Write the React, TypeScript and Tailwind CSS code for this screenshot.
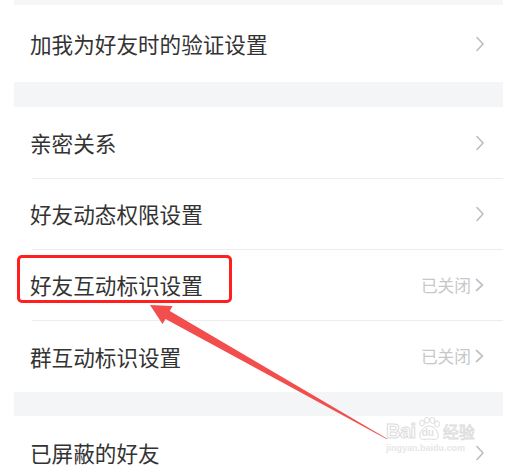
import React from "react";

const font = { fontFamily: '"Noto Sans CJK SC", "Noto Sans", sans-serif' };

function Chevron({ small }: { small?: boolean }) {
  return small ? (
    <svg width="11" height="14" viewBox="0 0 11 14" className="shrink-0">
      <path d="M2.5 1.5 L8.5 7 L2.5 12.5" fill="none" stroke="#c4c4c4" strokeWidth="1.8" strokeLinejoin="round" strokeLinecap="round" />
    </svg>
  ) : (
    <svg width="10" height="16" viewBox="0 0 10 16" className="shrink-0">
      <path d="M2 1.5 L8 8 L2 14.5" fill="none" stroke="#bdbdbd" strokeWidth="1.6" strokeLinejoin="round" strokeLinecap="round" />
    </svg>
  );
}

function Row({ label, value, sep, h = "h-[71px]" }: { label: string; value?: string; sep?: boolean; h?: string }) {
  return (
    <div className="flex flex-col shrink-0">
      <div className={`flex items-center ${h} pl-[16px] pr-[18px] bg-white`}>
        <span className="flex-1 text-[21.6px] leading-none text-[#333333]">{label}</span>
        {value ? (
          <div className="flex items-center gap-[3px]">
            <span className="text-[16.7px] leading-none text-[#c8c8c8]">{value}</span>
            <Chevron small />
          </div>
        ) : (
          <Chevron />
        )}
      </div>
      {sep && (
        <div className="flex bg-white">
          <div className="w-[18px]" />
          <div className="flex-1 h-px bg-[#ececec]" />
        </div>
      )}
    </div>
  );
}

export default function App() {
  return (
    <div className="relative w-[505px] h-[466px] overflow-hidden bg-white flex" style={font}>
      <div className="w-[14px] shrink-0 bg-white" />
      <div className="w-[489px] flex flex-col">
        <div className="h-[5px] shrink-0 bg-[#f5f6f8]" />
        <Row label="加我为好友时的验证设置" h="h-[77px]" />
        <div className="h-[25px] shrink-0 bg-[#f4f5f7]" />
        <Row label="亲密关系" sep />
        <Row label="好友动态权限设置" sep h="h-[70px]" />
        <Row label="好友互动标识设置" value="已关闭" sep h="h-[70px]" />
        <Row label="群互动标识设置" value="已关闭" />
        <div className="h-[24px] shrink-0 bg-[#f4f5f7]" />
        <Row label="已屏蔽的好友" h="h-[74px]" />
      </div>

      {/* red highlight box */}
      <div className="absolute left-[17px] top-[255px] w-[215px] h-[48px] border-[3px] border-[#ff1f1f] rounded-[5px]" />

      {/* arrow */}
      <svg className="absolute left-0 top-0" width="505" height="466" viewBox="0 0 505 466">
        <polygon
          points="150,305 162.5,324 165.5,319 387.3,439.6 386.8,438.6 169.8,311 172.5,306"
          fill="#f24e4e"
        />
      </svg>

      {/* watermark */}
      <div className="absolute left-[386px] top-[417px] flex flex-col items-start">
        <div className="flex items-end h-[24px]">
          <span
            className="text-[20px] leading-none font-bold text-white tracking-[-0.5px] [-webkit-text-stroke:1px_#dcdcdc]"
            style={{ fontFamily: '"Liberation Sans", Arial, sans-serif' }}
          >
            Bai
          </span>
          <div className="relative w-[24px] h-[24px] ml-[1px]">
            <svg width="24" height="24" viewBox="0 0 24 24" className="absolute left-0 top-0">
              <ellipse cx="5" cy="6" rx="2.4" ry="3" fill="white" stroke="#dcdcdc" strokeWidth="1" />
              <ellipse cx="10" cy="3.2" rx="2.4" ry="3" fill="white" stroke="#dcdcdc" strokeWidth="1" />
              <ellipse cx="15.5" cy="3.4" rx="2.4" ry="3" fill="white" stroke="#dcdcdc" strokeWidth="1" />
              <ellipse cx="20" cy="7" rx="2.4" ry="3" fill="white" stroke="#dcdcdc" strokeWidth="1" />
              <path d="M12 9 C6 9 2 16 3 20 C4 24 9 22 12 22 C15 22 20 24 21 20 C22 16 18 9 12 9 Z" fill="white" stroke="#dcdcdc" strokeWidth="1" />
            </svg>
            <span
              className="absolute left-[5px] top-[11px] text-[10px] leading-none font-bold text-[#e2e2e2]"
              style={{ fontFamily: '"Liberation Sans", Arial, sans-serif' }}
            >
              du
            </span>
          </div>
          <span className="text-[16px] leading-none ml-[2px] mb-[2px] text-white [-webkit-text-stroke:0.8px_#dcdcdc]">经验</span>
        </div>
        <span
          className="text-[9px] leading-none mt-[3px] text-[#e6e6e6] font-bold"
          style={{ fontFamily: '"Liberation Sans", Arial, sans-serif' }}
        >
          jingyan.baidu.com
        </span>
      </div>
    </div>
  );
}
